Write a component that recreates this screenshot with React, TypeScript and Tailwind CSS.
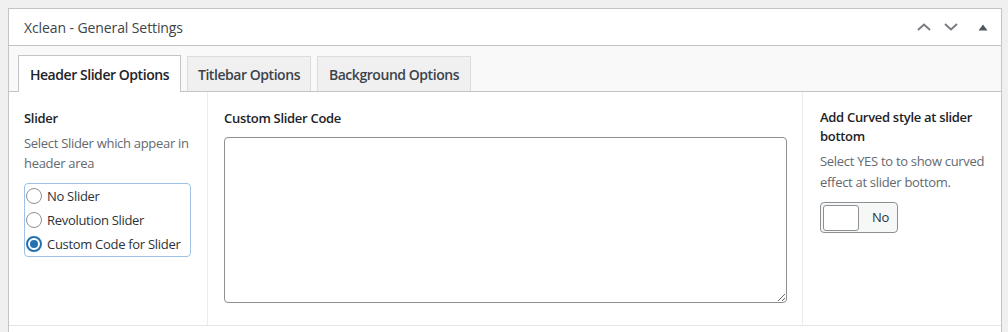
import React, { useState } from "react";

const font = { fontFamily: '"Open Sans", "Noto Sans", Arial, sans-serif' };

function Radio({ checked, label }: { checked?: boolean; label: string }) {
  return (
    <label className="flex h-[24px] items-center gap-[5px] pl-[1px] text-[13px] tracking-[-0.3px] text-[#2c3338]">
      <span
        className={
          checked
            ? "flex h-[16px] w-[16px] items-center justify-center rounded-full border-2 border-[#2271b1] bg-white"
            : "h-[16px] w-[16px] rounded-full border border-[#8c8f94] bg-white"
        }
      >
        {checked && <span className="h-[8px] w-[8px] rounded-full bg-[#2271b1]" />}
      </span>
      <span className="pt-[2px]">{label}</span>
    </label>
  );
}

export default function App() {
  const [tab] = useState(0);
  const tabs = [
    { label: "Header Slider Options", w: "w-[163px]" },
    { label: "Titlebar Options", w: "w-[124px]" },
    { label: "Background Options", w: "w-[154px]" },
  ];

  return (
    <div className="h-[332px] w-[1008px] overflow-hidden bg-[#f0f0f1] pl-2 pt-2" style={font}>
      <div className="w-[994px] border border-[#c3c4c7] bg-white">
        {/* Header */}
        <div className="flex h-[37px] items-center justify-between border-b border-[#c3c4c7] pl-[15px] pr-[13px]">
          <h2 className="text-[14px] tracking-[-0.1px] text-[#3c434a]">Xclean - General Settings</h2>
          <div className="flex items-center">
            <svg width="14" height="8" viewBox="0 0 14 8" className="mr-[13px]">
              <path d="M1 7 L7 1.5 L13 7" fill="none" stroke="#787c82" strokeWidth="2" />
            </svg>
            <svg width="14" height="8" viewBox="0 0 14 8" className="mr-[20px]">
              <path d="M1 1 L7 6.5 L13 1" fill="none" stroke="#787c82" strokeWidth="2" />
            </svg>
            <svg width="10" height="7" viewBox="0 0 10 7">
              <path d="M5 0.5 L9.5 6.5 L0.5 6.5 Z" fill="#50575e" />
            </svg>
          </div>
        </div>

        {/* Tabs */}
        <div className="flex h-[46px] items-end gap-[6px] border-b border-[#c3c4c7] bg-[#f9f9f9] pl-[9px]">
          {tabs.map((t, i) => (
            <div
              key={t.label}
              className={
                i === tab
                  ? `${t.w} -mb-px flex h-[37px] items-center justify-center border border-b-0 border-[#c3c4c7] bg-white text-[14px] font-semibold tracking-[-0.45px] text-[#1d2327]`
                  : `${t.w} flex h-[35px] items-center justify-center border border-b-0 border-[#dcdcde] bg-[#f0f0f1] text-[14px] font-semibold tracking-[-0.45px] text-[#3c434a]`
              }
            >
              {t.label}
            </div>
          ))}
        </div>

        {/* Content */}
        <div className="flex h-[234px] border-b border-[#e5e5e5] tracking-[-0.3px]">
          <div className="w-[199px] border-r border-[#ececec] pl-[15px] pt-[16px]">
            <div className="text-[13px] font-semibold leading-[20px] text-[#1d2327]">Slider</div>
            <p className="mt-[5px] w-[175px] text-[13px] leading-[20px] text-[#646970]">
              Select Slider which appear in header area
            </p>
            <div className="mt-[10px] w-[167px] rounded-[4px] border border-[#9ec2e6]">
              <Radio label="No Slider" />
              <Radio label="Revolution Slider" />
              <Radio label="Custom Code for Slider" checked />
            </div>
          </div>

          <div className="w-[595px] border-r border-[#ececec] pl-[16px] pt-[16px]">
            <div className="text-[13px] font-semibold leading-[20px] text-[#1d2327]">Custom Slider Code</div>
            <textarea className="mt-[9px] block h-[166px] w-[563px] resize-y rounded-[4px] border border-[#8c8f94] bg-white" />
          </div>

          <div className="flex-1 pl-[17px] pt-[16px]">
            <div className="whitespace-nowrap text-[13px] font-semibold leading-[19px] text-[#1d2327]">
              Add Curved style at slider
              <br />
              bottom
            </div>
            <p className="mt-[5px] whitespace-nowrap text-[13px] leading-[21px] text-[#646970]">
              Select YES to to show curved
              <br />
              effect at slider bottom.
            </p>
            <div className="mt-[9px] flex h-[31px] w-[78px] items-center rounded-[4px] border border-[#8c8f94] bg-[#f6f7f7] pl-[2px]">
              <span className="h-[26px] w-[36px] rounded-[3px] border border-[#8c8f94] bg-white" />
              <span className="ml-[13px] text-[13px] text-[#2c3338]">No</span>
            </div>
          </div>
        </div>
        <div className="h-[10px]" />
      </div>
    </div>
  );
}
